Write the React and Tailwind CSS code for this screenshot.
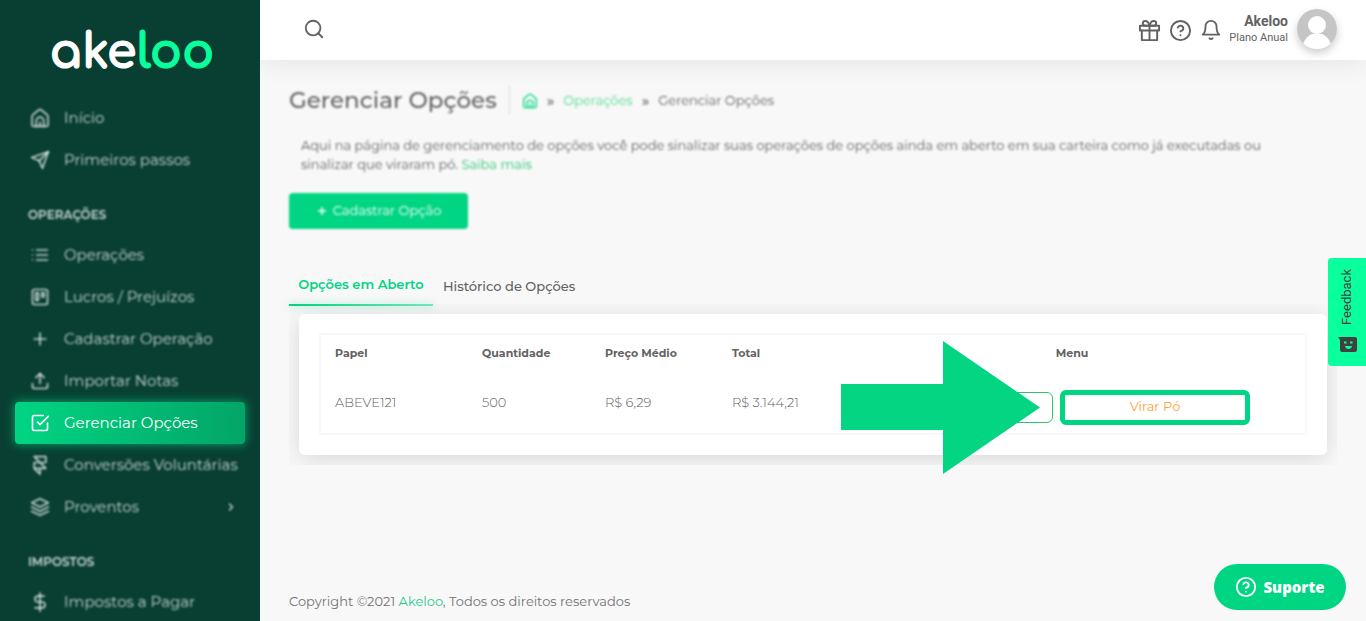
import { FiSend, FiList, FiTrello, FiPlus, FiUpload, FiCheckSquare, FiFramer, FiLayers, FiDollarSign, FiChevronRight, FiSearch, FiGift, FiHelpCircle, FiBell } from 'react-icons/fi'

function HomeIcon({ className }) {
  return (
    <svg viewBox="0 0 24 24" fill="none" stroke="currentColor" strokeWidth="2" strokeLinecap="round" strokeLinejoin="round" className={className}>
      <path d="M2.500 10.200c0-.9.4-1.700 1.100-2.300L10.400 2.400c.9-.8 2.300-.8 3.200 0l6.800 5.500c.7.600 1.100 1.400 1.100 2.300V20a2 2 0 0 1-2 2h-15a2 2 0 0 1-2-2z" />
      <path d="M7.500 22v-6.500a4.500 4.500 0 0 1 9 0V22M12 17v5" />
    </svg>
  )
}

function FeedbackIcon({ className }) {
  return (
    <svg viewBox="0 0 19 15" className={className}>
      <path d="M0 0h17a2 2 0 0 1 2 2v11a2 2 0 0 1-2 2H4a2 2 0 0 1-2-2V3z" fill="#404040" />
      <path d="M6 4.500h2.500V6.500H6zM12 4.500h2.500V6.500H12zM7 9h7c0 1.500-1.500 3-3.500 3S7 10.500 7 9z" fill="#0aff9d" />
    </svg>
  )
}

function MenuLink({ icon: Icon, label, active, arrow }) {
  return (
    <li className="px-[15px]">
      <a
        href="#"
        className={
          active
            ? 'flex h-[42px] items-center rounded bg-linear-to-r from-[#00d583] to-[#03a567] pl-[15px] text-white shadow-[0_0_10px_1px_rgba(0,213,131,0.6)]'
            : 'flex h-[42px] items-center pl-[15px] text-white/75 blur-[1px]'
        }
      >
        <Icon className="size-5 shrink-0" />
        <span className="ml-[14px] text-[15px] whitespace-nowrap">{label}</span>
        {arrow && <FiChevronRight className="mr-2 ml-auto size-3" strokeWidth="3" />}
      </a>
    </li>
  )
}

function MenuTitle({ children }) {
  return <li className="flex h-[53px] items-end pb-[10px] pl-[28px] text-[12px] font-semibold text-white/80 blur-[1px]">{children}</li>
}

export default function App() {
  return (
    <div className="flex min-h-screen bg-[#f8f8f8] font-['Montserrat','Inter',sans-serif] text-[#626262]">
      <aside className="sticky top-0 h-screen w-[260px] shrink-0 overflow-hidden bg-[#083f32]">
        <a href="#" className="flex h-[97px] items-center justify-center pt-2 pl-1 font-['Comfortaa','Inter',sans-serif] text-[48px] leading-none font-bold text-white [-webkit-text-stroke:1px]">
          ake<span className="text-[#0aff9d]">loo</span>
        </a>
        <nav>
          <ul>
            <MenuLink icon={HomeIcon} label="Início" />
            <MenuLink icon={FiSend} label="Primeiros passos" />
            <MenuTitle>OPERAÇÕES</MenuTitle>
            <MenuLink icon={FiList} label="Operações" />
            <MenuLink icon={FiTrello} label="Lucros / Prejuízos" />
            <MenuLink icon={FiPlus} label="Cadastrar Operação" />
            <MenuLink icon={FiUpload} label="Importar Notas" />
            <MenuLink icon={FiCheckSquare} label="Gerenciar Opções" active />
            <MenuLink icon={FiFramer} label="Conversões Voluntárias" />
            <MenuLink icon={FiLayers} label="Proventos" arrow />
            <MenuTitle>IMPOSTOS</MenuTitle>
            <MenuLink icon={FiDollarSign} label="Impostos a Pagar" />
          </ul>
        </nav>
      </aside>

      <div className="flex min-w-0 grow flex-col">
        <header className="flex h-[60px] items-center bg-white pr-[29px] pb-[2px] pl-[43px] shadow-[0_4px_24px_rgba(0,0,0,0.08)]">
          <button type="button" aria-label="Buscar"><FiSearch className="size-[22px]" /></button>
          <div className="ml-auto flex items-center">
            <div className="mr-[7px] flex items-center gap-2 pt-[2px]">
              <button type="button" aria-label="Presentes"><FiGift className="size-[23px]" /></button>
              <button type="button" aria-label="Ajuda"><FiHelpCircle className="size-[23px]" /></button>
              <button type="button" aria-label="Notificações"><FiBell className="size-[22px]" /></button>
            </div>
            <div className="text-right font-['Roboto',sans-serif]">
              <p className="text-[14px] leading-[17px] font-bold">Akeloo</p>
              <p className="text-[11px] leading-4">Plano Anual</p>
            </div>
            <svg viewBox="0 0 40 40" className="ml-[9px] size-10 rounded-full shadow-[0_4px_8px_rgba(0,0,0,0.2)]">
              <rect width="40" height="40" fill="#c5c5c5" />
              <path d="M5 40c1-8 5-13 10-15h10c5 2 9 7 10 15z" fill="#fff" />
              <circle cx="20" cy="16" r="9" fill="#fff" />
            </svg>
          </div>
        </header>

        <main className="grow px-[29px] pt-[26px]">
          <div className="flex items-center blur-[1px]">
            <h1 className="border-r border-[#d6dce1] pr-3 text-[23px] leading-7 font-medium text-[#636363]">Gerenciar Opções</h1>
            <nav className="flex items-center gap-[9px] pt-[2px] pl-3 text-[13px]">
              <a href="#" aria-label="Início" className="text-[#00d583]"><HomeIcon className="size-4" /></a>
              <span className="text-[15px] leading-4 font-medium">»</span>
              <a href="#" className="text-[#4fdc92]">Operações</a>
              <span className="text-[15px] leading-4 font-medium">»</span>
              <span>Gerenciar Opções</span>
            </nav>
          </div>
          <p className="mt-[22px] pr-10 pl-3 text-[13px] leading-[19px] blur-[1px]">
            Aqui na página de gerenciamento de opções você pode sinalizar suas operações de opções ainda em aberto em sua carteira como já executadas ou sinalizar que viraram pó. <a href="#" className="text-[#28c76f]">Saiba mais</a>
          </p>
          <button type="button" className="mt-[19px] flex h-9 w-[179px] items-center justify-center gap-[5px] rounded bg-[#00d583] text-[13px] text-white blur-[1px]">
            <FiPlus className="size-3" strokeWidth="3" /> Cadastrar Opção
          </button>

          <div role="tablist" className="mt-[37px] flex h-10 text-[13px] font-medium">
            <button type="button" role="tab" aria-selected="true" className="relative w-36 pb-[2px] font-semibold text-[#00d583]">
              Opções em Aberto
              <span className="absolute inset-x-0 bottom-0 h-[2px] bg-linear-to-r from-[#00d583] to-[#00d583]/50 shadow-[0_0_8px_rgba(0,213,131,0.5)]" />
            </button>
            <button type="button" role="tab" aria-selected="false" className="px-[10px] pt-[2px]">Histórico de Opções</button>
          </div>

          <div className="relative -mt-[2px] p-[10px]">
            <div className="absolute inset-0 overflow-hidden p-[10px]">
              <div className="h-full rounded-md bg-white shadow-[0_4px_25px_rgba(0,0,0,0.13)]" />
            </div>
            <div className="relative p-5 pt-[19px]">
              <table className="w-full table-fixed border-2 border-[#f8f8f8] text-left">
                <thead>
                  <tr className="h-[38px] text-[11px]">
                    <th className="w-[148px] px-[14px] font-bold">Papel</th>
                    <th className="w-[123px] px-[14px] font-bold">Quantidade</th>
                    <th className="w-[127px] px-[14px] font-bold">Preço Médio</th>
                    <th className="w-[121px] px-[14px] font-bold">Total</th>
                    <th className="text-center font-bold">Menu</th>
                  </tr>
                </thead>
                <tbody>
                  <tr className="h-[62px] text-[13px] font-light">
                    <td className="px-[14px]">ABEVE121</td>
                    <td className="px-[14px]">500</td>
                    <td className="px-[14px]">R$ 6,29</td>
                    <td className="px-[14px]">R$ 3.144,21</td>
                    <td>
                      <div className="relative flex gap-[7px] pt-[9px] pl-6">
                        <button type="button" aria-label="Executar" className="my-[2px] h-[31px] w-[190px] rounded-md border border-[#28c76f]" />
                        <button type="button" className="h-[35px] w-[190px] rounded-md border-[5px] border-[#00d583] text-[13px] font-normal text-[#ff9f43]">Virar Pó</button>
                        <svg viewBox="0 0 199 133" className="absolute -top-10 left-[2px] h-[133px] w-[199px]">
                          <path d="M0 43h102V0l97 66.500L102 133V89H0z" fill="#04d583" />
                        </svg>
                      </div>
                    </td>
                  </tr>
                </tbody>
              </table>
            </div>
          </div>
        </main>

        <footer className="px-[29px] pb-[10px] text-[13px] leading-5 text-[#737373]">
          Copyright ©2021 <a href="#" className="text-[#28c98a]">Akeloo</a>, Todos os direitos reservados
        </footer>
      </div>

      <button type="button" className="fixed top-[258px] right-0 flex h-[108px] w-[38px] flex-col items-center justify-between rounded-l-sm bg-[#0aff9d] pt-[11px] pb-[14px] font-['Roboto',sans-serif] text-[13px] text-[#404040]">
        <span className="rotate-180 [writing-mode:vertical-rl]">Feedback</span>
        <FeedbackIcon className="h-[15px] w-[19px]" />
      </button>
      <button type="button" className="fixed right-5 bottom-[11px] flex h-[46px] w-[132px] items-center justify-center gap-[6px] rounded-full bg-[#00d583] font-['Open_Sans',sans-serif] text-[15px] font-extrabold text-white">
        <FiHelpCircle className="size-[22px]" /> Suporte
      </button>
    </div>
  )
}
